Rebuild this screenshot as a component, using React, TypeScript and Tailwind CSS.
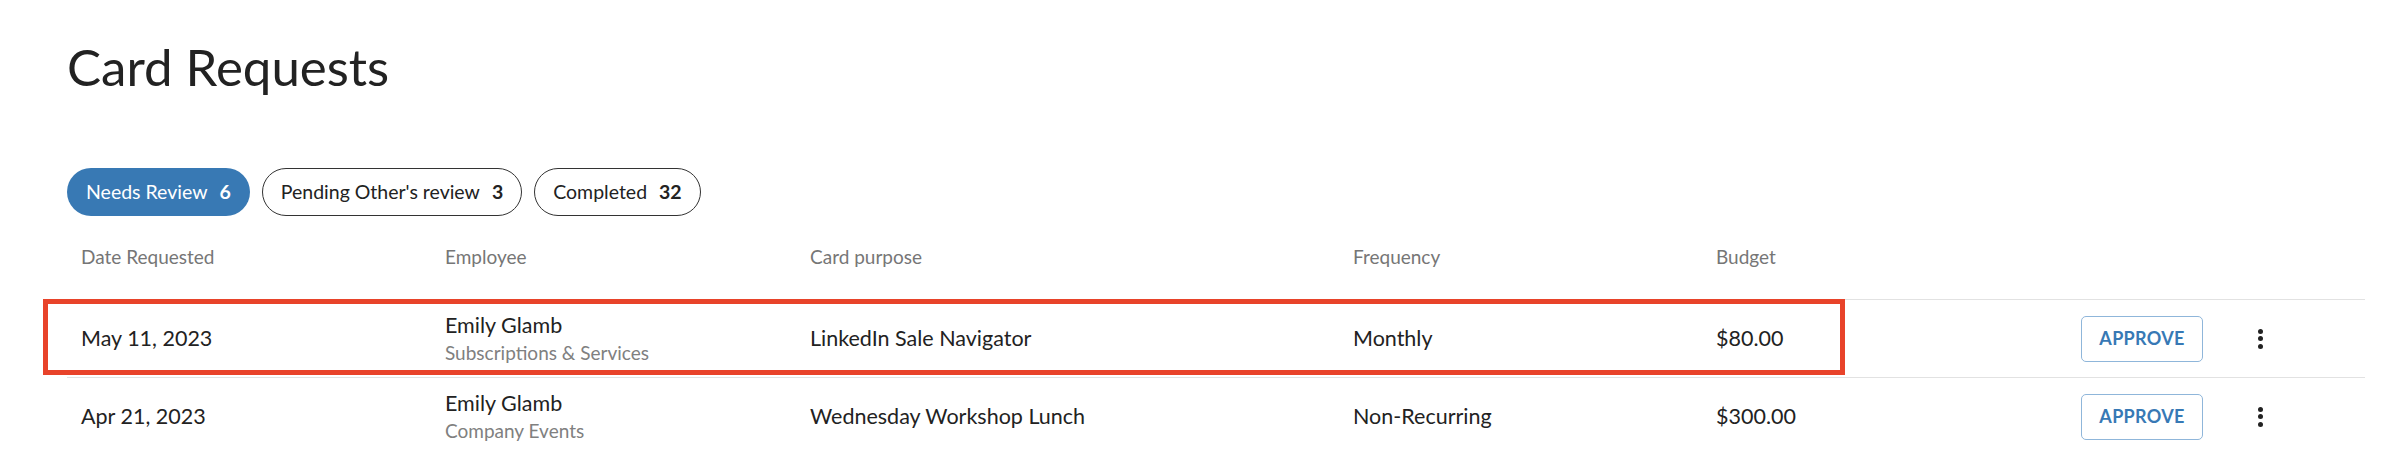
import React from 'react';

const rows = [
  {
    date: 'May 11, 2023',
    name: 'Emily Glamb',
    category: 'Subscriptions & Services',
    purpose: 'LinkedIn Sale Navigator',
    frequency: 'Monthly',
    budget: '$80.00',
    highlighted: true,
  },
  {
    date: 'Apr 21, 2023',
    name: 'Emily Glamb',
    category: 'Company Events',
    purpose: 'Wednesday Workshop Lunch',
    frequency: 'Non-Recurring',
    budget: '$300.00',
    highlighted: false,
  },
];

const tabs = [
  { label: 'Needs Review', count: 6, active: true },
  { label: "Pending Other's review", count: 3, active: false },
  { label: 'Completed', count: 32, active: false },
];

function Kebab() {
  return (
    <div className="flex flex-col items-center gap-[2.5px]">
      <span className="block w-[5px] h-[5px] rounded-full bg-[#222]" />
      <span className="block w-[5px] h-[5px] rounded-full bg-[#222]" />
      <span className="block w-[5px] h-[5px] rounded-full bg-[#222]" />
    </div>
  );
}

export default function App() {
  return (
    <div className="w-[2382px] h-[454px] overflow-hidden bg-white font-['Lato','Noto_Sans',sans-serif] text-[#222]">
      <div className="pl-[67px] pr-[17px] pt-[37px]">
        <h1 className="text-[51px] leading-[60px] font-normal text-[#222]">Card Requests</h1>

        <div className="flex gap-[12px] mt-[71px]">
          {tabs.map((t) => (
            <button
              key={t.label}
              className={
                t.active
                  ? 'h-[48px] px-[19px] rounded-full bg-[#3879b4] text-white flex items-center gap-[12px] text-[19.5px]'
                  : 'h-[48px] px-[18px] rounded-full border border-[#333] bg-white text-[#222] flex items-center gap-[12px] text-[19.5px]'
              }
            >
              <span>{t.label}</span>
              <span className="font-bold">{t.count}</span>
            </button>
          ))}
        </div>

        <div className="flex items-center h-[83px] text-[19px] text-[#767676]">
          <div className="w-[364px] pl-[14px]">Date Requested</div>
          <div className="w-[365px] pl-[14px]">Employee</div>
          <div className="w-[543px] pl-[14px]">Card purpose</div>
          <div className="w-[363px] pl-[14px]">Frequency</div>
          <div className="w-[365px] pl-[14px]">Budget</div>
        </div>

        {rows.map((r) => (
          <div key={r.date} className="relative flex items-center h-[78px] border-t border-[#e2e2e2] text-[21.5px]">
            <div className="w-[364px] pl-[14px]">{r.date}</div>
            <div className="w-[365px] pl-[14px] flex flex-col">
              <span className="leading-[28px]">{r.name}</span>
              <span className="text-[19px] leading-[28px] text-[#808080]">{r.category}</span>
            </div>
            <div className="w-[543px] pl-[14px]">{r.purpose}</div>
            <div className="w-[363px] pl-[14px]">{r.frequency}</div>
            <div className="w-[365px] pl-[14px]">{r.budget}</div>
            <div className="pl-[14px]">
              <button className="w-[122px] h-[46px] rounded-[5px] border border-[#8fb6da] text-[#3779b5] font-bold text-[18px] tracking-[0.3px]">
                APPROVE
              </button>
            </div>
            <div className="w-[114px] flex justify-center">
              <Kebab />
            </div>
            {r.highlighted && (
              <div className="absolute left-[-24px] top-[-1px] w-[1802px] h-[76px] border-[5px] border-[#e8432a] pointer-events-none" />
            )}
          </div>
        ))}
      </div>
    </div>
  );
}
